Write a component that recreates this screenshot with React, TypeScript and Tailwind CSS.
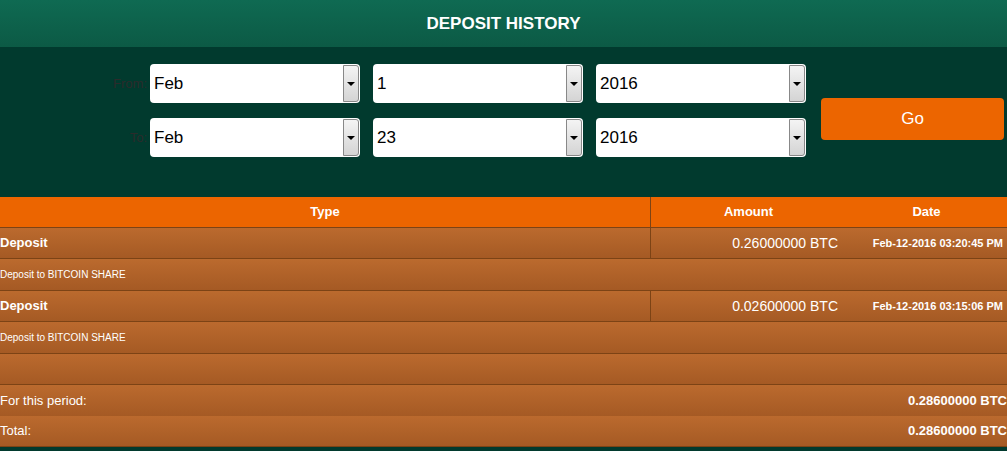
const FONT = { fontFamily: '"Liberation Sans", Arial, sans-serif' };

function Select({ value }: { value: string }) {
  return (
    <div className="flex h-[39px] w-[210px] items-stretch rounded-[4px] bg-white">
      <div className="flex flex-1 items-center pl-1 text-[17px] text-black">{value}</div>
      <div className="my-[1px] mr-[1px] flex w-[16px] items-center justify-center rounded-r-[3px] border border-[#888] bg-gradient-to-b from-[#f4f4f4] to-[#d4d4d4]">
        <span className="h-0 w-0 border-x-[4px] border-t-[4px] border-x-transparent border-t-black" />
      </div>
    </div>
  );
}

const rowBg = 'bg-gradient-to-b from-[#bb6a2e] to-[#a55a24] border-b border-[#7c4315]';

export default function App() {
  return (
    <div className="h-[451px] w-[1007px] bg-[#013a2e] text-white" style={FONT}>
      <div className="flex h-[47px] items-center justify-center bg-gradient-to-b from-[#0f6a52] to-[#0c5a45] text-[17px] font-bold">
        DEPOSIT HISTORY
      </div>
      <div className="flex h-[150px] items-start">
        <div className="flex flex-col gap-[15px] pt-[17px]">
          {[
            ['From:', 'Feb', '1', '2016'],
            ['To:', 'Feb', '23', '2016'],
          ].map(([l, m, d, y]) => (
            <div key={l} className="flex items-center">
              <span className="w-[150px] pr-[3px] text-right text-[13px] text-[#2b2b2b]">{l}</span>
              <div className="flex gap-[13px]">
                <Select value={m} />
                <Select value={d} />
                <Select value={y} />
              </div>
            </div>
          ))}
        </div>
        <button className="ml-[15px] mt-[51px] h-[42px] w-[183px] rounded-[4px] bg-[#ec6500] text-[17px] text-white">Go</button>
      </div>
      <div className="flex h-[31px] items-center bg-[#ec6500] text-[13px] font-bold border-b border-[#7c4315]">
        <div className="flex h-full w-[651px] items-center justify-center border-r border-[#7c4315]">Type</div>
        <div className="w-[195px] text-center">Amount</div>
        <div className="flex-1 text-center">Date</div>
      </div>
      {[
        ['0.26000000 BTC', 'Feb-12-2016 03:20:45 PM'],
        ['0.02600000 BTC', 'Feb-12-2016 03:15:06 PM'],
      ].map(([a, d]) => (
        <div key={d}>
          <div className={`flex h-[31px] items-center text-[13px] font-bold ${rowBg}`}>
            <div className="flex h-full w-[651px] items-center border-r border-[#7c4315]">Deposit</div>
            <div className="w-[187px] text-right text-[14px] font-normal">{a}</div>
            <div className="flex-1 pr-[4px] text-right text-[11px]">{d}</div>
          </div>
          <div className={`flex h-[32px] items-center text-[10px] ${rowBg}`}>Deposit to BITCOIN SHARE</div>
        </div>
      ))}
      <div className={`h-[31px] ${rowBg}`} />
      <div className="flex h-[31px] items-center justify-between bg-gradient-to-b from-[#bb6a2e] to-[#a55a24] text-[13px]">
        <span>For this period:</span>
        <span className="font-bold">0.28600000 BTC</span>
      </div>
      <div className={`flex h-[31px] items-center justify-between text-[13px] ${rowBg}`}>
        <span>Total:</span>
        <span className="font-bold">0.28600000 BTC</span>
      </div>
    </div>
  );
}
